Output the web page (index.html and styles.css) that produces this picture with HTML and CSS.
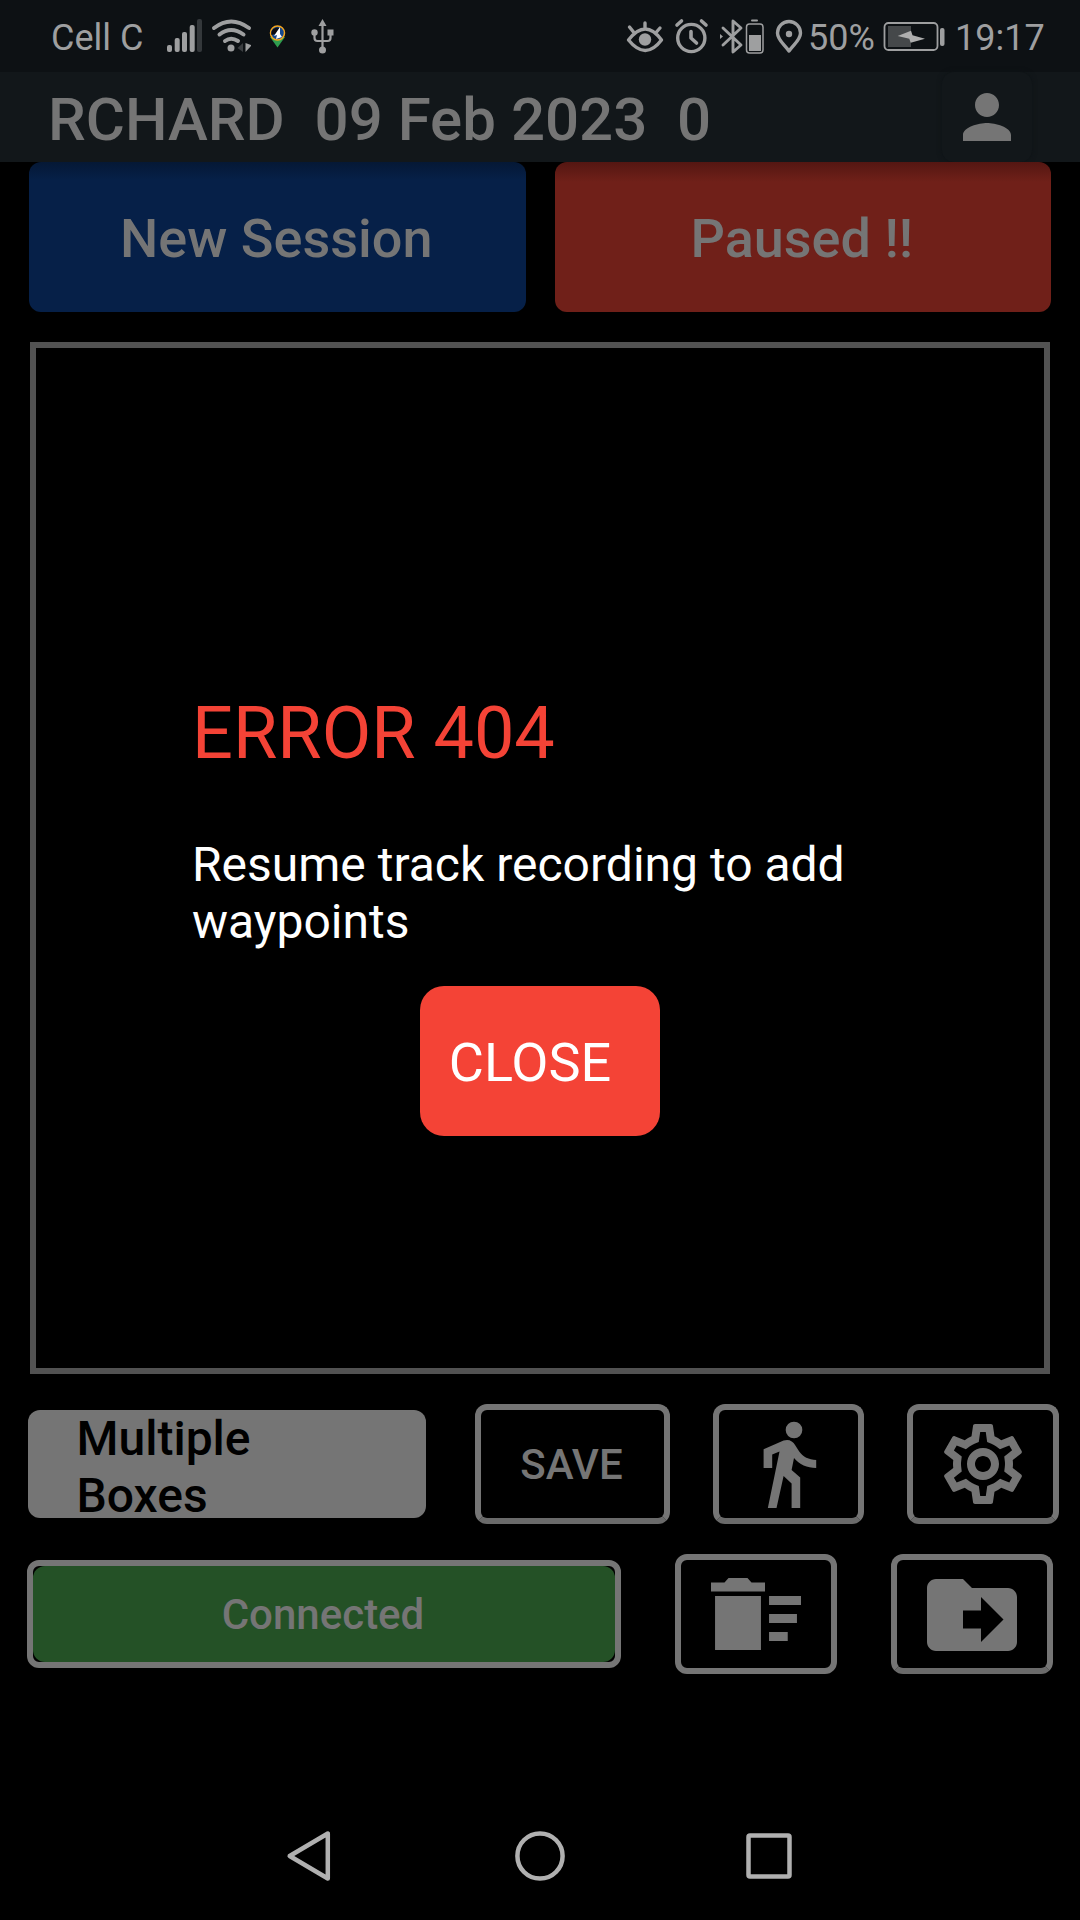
FILE: index.html
```html
<!DOCTYPE html>
<html lang="en">
<head>
<meta charset="utf-8">
<title>Track recorder</title>
<link rel="stylesheet" href="styles.css">
</head>
<body>
<div class="screen">
  <header class="status">
    <span class="carrier">Cell C</span>
    <svg class="status-left" width="180" height="50" viewBox="160 10 180 50">
      <g fill="#9e9fa0">
        <rect x="167" y="45" width="5" height="7" rx="2"/>
        <rect x="174.700" y="38" width="5" height="14" rx="2"/>
        <rect x="182" y="32" width="5" height="20" rx="2"/>
        <rect x="189.700" y="25" width="5" height="27" rx="2"/>
        <rect x="197" y="19" width="5" height="33" rx="2" fill="#34383b"/>
        <circle cx="231" cy="48" r="3.500"/>
        <path d="M245.500 43v9l5.500-6v-1z"/>
        <path d="M243 43v9l-5.500-4z" fill="#3a3d40"/>
      </g>
      <g fill="none" stroke="#9e9fa0" stroke-width="4" stroke-linecap="round">
        <path d="M214 28q17-13 35 0"/>
        <path d="M219.500 34.500q11.500-9 24 0"/>
        <path d="M225 41q6-4.500 13 0"/>
      </g>
      <path d="M270 37l7.500 10.500L285 37z" fill="#2f9e4f"/>
      <circle cx="277.500" cy="33" r="7" fill="#15498f" stroke="#f5a51e" stroke-width="1.500"/>
      <path d="M271.500 35a6 6 0 0 1 8-7l-4 6z" fill="#0a0a10"/>
      <path d="M280 27l-6 9 3-1-1 4 6-2-2-3z" fill="#fff"/>
      <g fill="#9e9fa0">
        <circle cx="322.500" cy="50" r="3.500"/><path d="M322.500 19l4 7h-8z"/>
        <circle cx="314.500" cy="32.500" r="3.200"/><rect x="327.500" y="29.500" width="6" height="6"/>
      </g>
      <path d="M322.500 24v25M314.500 33v5q0 3 3 3h10q3 0 3-3v-4" fill="none" stroke="#9e9fa0" stroke-width="2.200"/>
    </svg>
    <svg class="status-right" width="190" height="50" viewBox="620 10 190 50">
      <g fill="none" stroke="#9e9fa0" stroke-width="3.400" stroke-linecap="round" stroke-linejoin="round">
        <path d="M628.500 40q17-22 33 0q-16 21-33 0zM645 23v6M629.500 27l4 5M660 28l-3.500 4"/>
        <circle cx="691.300" cy="38" r="13.600"/><path d="M691 31.500v6.500l5.500 5M677 25l4.500-4M706 25l-4.500-4" stroke-width="3.600"/>
        <path d="M723 28l18 17-8 7V21l8 7-18 17" stroke-width="2.900"/>
        <rect x="746.500" y="24" width="16.500" height="29" rx="3" stroke-width="1.500"/>
        <path d="M752 20.500h5" stroke-width="2"/>
        <path d="M789 51c-5-7-11.500-11-11.500-18a11.500 11.500 0 0 1 23 0c0 7-6.500 11-11.500 18z"/>
      </g>
      <g fill="#9e9fa0"><circle cx="645" cy="39.500" r="6.200"/><rect x="749" y="35" width="12" height="16"/><circle cx="789" cy="34" r="3.200"/><path d="M720 34l3 2.500-3 2.500z"/></g>
    </svg>
    <span class="percent">50%</span>
    <svg class="battery" width="62" height="32" viewBox="883 20 62 32">
      <rect x="884.500" y="23" width="53" height="27" rx="4" fill="none" stroke="#9e9fa0" stroke-width="1.800"/>
      <rect x="888" y="26" width="23" height="21" fill="#45484a"/>
      <path d="M897.700 36L911 30.700l1.500 4.600L925 38.700l-14.300 4-1.400-4z" fill="#aeaeae"/>
      <rect x="940" y="28" width="4.500" height="18" rx="2" fill="#9e9fa0"/>
    </svg>
    <span class="clock">19:17</span>
  </header>

  <div class="appbar">
    <h1 class="title">RCHARD&nbsp; 09 Feb 2023&nbsp; 0</h1>
    <button class="profile" aria-label="Profile">
      <svg width="72" height="72" viewBox="0 0 24 24"><path d="M12 12c2.210 0 4-1.790 4-4s-1.790-4-4-4-4 1.790-4 4 1.790 4 4 4zm0 2c-2.670 0-8 1.340-8 4v2h16v-2c0-2.660-5.330-4-8-4z"/></svg>
    </button>
  </div>

  <div class="session-row">
    <button class="session new">New Session</button>
    <button class="session paused">Paused !!</button>
  </div>

  <main class="map">
    <section class="dialog">
      <h2 class="error-title">ERROR 404</h2>
      <p class="error-text">Resume track recording to add waypoints</p>
      <button class="close">CLOSE</button>
    </section>
  </main>

  <div class="tools">
    <button class="boxes">Multiple Boxes</button>
    <button class="outlined shaded save">SAVE</button>
    <button class="outlined shaded walk" aria-label="Walk">
      <svg width="96" height="96" viewBox="0 0 24 24"><circle cx="13.500" cy="3.500" r="2.080"/><path d="M5.900 8.300L10.900 6.150C12.100 5.700 13.200 6.200 13.800 7.300L14.800 8.900C15.700 10.200 17.200 11 19.050 11V13C16.800 13 14.800 12.100 13.500 10.500L12.900 13.500 15.050 15.400V23H12.900V16.850L10.900 15 9.130 23H6.960L9.880 8.900 8.050 9.600V13H5.900z"/></svg>
    </button>
    <button class="outlined shaded settings" aria-label="Settings">
      <svg width="96" height="96" viewBox="0 0 24 24"><path d="M19.430 12.980c.04-.32.07-.64.07-.98 0-.34-.03-.66-.07-.98l2.110-1.650c.19-.15.24-.42.12-.64l-2-3.460c-.09-.16-.26-.25-.44-.25-.06 0-.12.01-.17.03l-2.490 1c-.52-.4-1.080-.73-1.690-.98l-.38-2.650C14.460 2.180 14.250 2 14 2h-4c-.25 0-.46.18-.49.42l-.38 2.650c-.61.25-1.170.59-1.690.98l-2.490-1c-.06-.02-.12-.03-.18-.03-.17 0-.34.09-.43.25l-2 3.460c-.13.22-.07.49.12.64l2.110 1.650c-.04.32-.07.65-.07.98 0 .33.03.66.07.98l-2.110 1.650c-.19.15-.24.42-.12.64l2 3.460c.09.16.26.25.44.25.06 0 .12-.01.17-.03l2.490-1c.52.4 1.080.73 1.690.98l.38 2.650c.03.24.24.42.49.42h4c.25 0 .46-.18.49-.42l.38-2.650c.61-.25 1.170-.59 1.690-.98l2.490 1c.06.02.12.03.18.03.17 0 .34-.09.43-.25l2-3.460c.12-.22.07-.49-.12-.64l-2.110-1.650zm-1.980-1.710c.04.31.05.52.05.73 0 .21-.02.43-.05.73l-.14 1.130.89.7 1.080.84-.7 1.210-1.270-.51-1.040-.42-.9.68c-.43.32-.84.56-1.250.73l-1.060.43-.16 1.130-.2 1.350h-1.400l-.19-1.350-.16-1.130-1.060-.43c-.43-.18-.83-.41-1.230-.71l-.91-.7-1.060.43-1.270.51-.7-1.210 1.080-.84.89-.7-.14-1.130c-.03-.31-.05-.54-.05-.74s.02-.43.05-.73l.14-1.130-.89-.7-1.080-.84.7-1.210 1.270.51 1.040.42.9-.68c.43-.32.84-.56 1.250-.73l1.060-.43.16-1.130.2-1.350h1.390l.19 1.350.16 1.130 1.060.43c.43.18.83.41 1.230.71l.91.7 1.060-.43 1.270-.51.7 1.210-1.070.85-.89.7.14 1.130zM12 8c-2.210 0-4 1.790-4 4s1.790 4 4 4 4-1.790 4-4-1.790-4-4-4zm0 6c-1.100 0-2-.9-2-2s.9-2 2-2 2 .9 2 2-.9 2-2 2z"/></svg>
    </button>
  </div>

  <div class="tools lower">
    <button class="connected"><span>Connected</span></button>
    <button class="outlined sweep" aria-label="Delete all">
      <svg width="108" height="108" viewBox="0 0 24 24"><path d="M14.900 16h4.150v2H14.900zm0-8H22v2h-7.100zm0 4h6.200v2h-6.200zM2.900 20h10.200V8H2.900zM14 5h-3l-.9-1H5.900L5 5H2v2h12z"/></svg>
    </button>
    <button class="outlined shaded move" aria-label="Move file">
      <svg width="108" height="108" viewBox="0 0 24 24"><path d="M20 6h-8l-2-2H4c-1.100 0-2 .9-2 2v12c0 1.100.9 2 2 2h16c1.100 0 2-.9 2-2V8c0-1.100-.9-2-2-2zm-6 12v-3h-4v-4h4V8l5 5-5 5z"/></svg>
    </button>
  </div>

  <nav class="navbar">
    <svg width="60" height="60" viewBox="0 0 60 60"><path d="M46.800 7.500v45L8.700 30z"/></svg>
    <svg width="60" height="60" viewBox="0 0 60 60"><circle cx="30" cy="30" r="22.600"/></svg>
    <svg width="60" height="60" viewBox="0 0 60 60"><rect x="9.500" y="9.500" width="41" height="41" rx="1.500"/></svg>
  </nav>
</div>
</body>
</html>
```
FILE: styles.css
```css
* { box-sizing: border-box; margin: 0; padding: 0; }
body { background: #000; font-family: Roboto, "Liberation Sans", sans-serif; }
button { font: inherit; border: 0; background: none; display: flex; align-items: center; justify-content: center; }
svg { display: block; flex: none; }
.screen { width: 1080px; height: 1920px; display: flex; flex-direction: column; overflow: hidden; }

.status { height: 72px; background: #0d1114; color: #9e9fa0; font-size: 36px; display: flex; align-items: center; white-space: nowrap; padding-left: 51px; }
.status span { flex: none; line-height: 72px; padding-top: 3px; }
.status svg { margin-bottom: 2px; }
.carrier { width: 109px; }
.status-right { margin-left: 280px; }
.percent { width: 75px; margin: 0 -2px; }
.status .battery { margin-bottom: 0; margin-left: 2px; }
.clock { margin-left: 10px; }

.appbar { height: 90px; background: #12171a; display: flex; align-items: center; justify-content: space-between; padding: 0 48px; }
.title { font-size: 60px; font-weight: 500; color: #757575; line-height: 90px; padding-top: 5px; white-space: pre; }
.profile { width: 90px; height: 90px; border-radius: 12px; background: #12171a; box-shadow: 0 0 5px #0e1316; }
.profile svg, .outlined svg { fill: #757575; }

.session-row { height: 150px; padding: 0 29px; display: flex; justify-content: space-between; }
.session { width: 496.500px; height: 150px; padding: 2px 2px 0 0; border-radius: 12px; font-size: 54px; font-weight: 500; color: #757575; }
.new { background: linear-gradient(#051835, #062048 18px); }
.paused { background: linear-gradient(#541612, #702019 20px); }

.map { margin: 30px 30px 0; height: 1032px; border: 6px solid #525252; display: flex; flex-direction: column; padding: 344px 156px 0; }
.dialog { display: flex; flex-direction: column; }
.error-title { font-size: 72px; font-weight: 400; line-height: 84px; color: #f44336; }
.error-text { margin-top: 60px; font-size: 48px; line-height: 57px; color: #fff; }
.close { align-self: center; margin-top: 36px; width: 240px; height: 150px; border-radius: 24px; background: #f44336; color: #fff; font-size: 54px; padding: 2px 20px 0 0; }

.tools { margin-top: 30px; height: 120px; display: flex; align-items: center; }
.boxes { margin-left: 27.500px; width: 398.500px; height: 108px; border-radius: 12px; background: #757575; color: #000; font-size: 48px; font-weight: 500; line-height: 57px; text-align: left; padding: 5px 110px 0 49px; justify-content: flex-start; }
.outlined { height: 120px; border: 6px solid #757575; border-radius: 12px; color: #757575; font-size: 42px; font-weight: 500; }
.shaded { border-bottom-color: #6a6a6a; }
.save { margin-left: 49px; width: 195px; padding-right: 2px; }
.walk { margin-left: 42.500px; width: 151.500px; }
.settings { margin-left: 43px; width: 151.500px; }
.connected { margin-left: 27px; width: 594px; height: 108px; border: 6px solid #757575; border-radius: 12px; }
.connected span { flex: 1; height: 96px; line-height: 96px; padding: 1px 2px 0 0; border-radius: 12px; background: #245126; color: #757575; font-size: 42px; font-weight: 500; }
.sweep { margin-left: 54px; width: 162px; }
.move { margin-left: 54px; width: 162px; padding-top: 2px; }

.navbar { margin-top: auto; height: 128px; display: flex; justify-content: center; align-items: center; gap: 169px; }
.navbar svg { fill: none; stroke: #b0b0b0; stroke-width: 4.500; stroke-linejoin: round; }
```
